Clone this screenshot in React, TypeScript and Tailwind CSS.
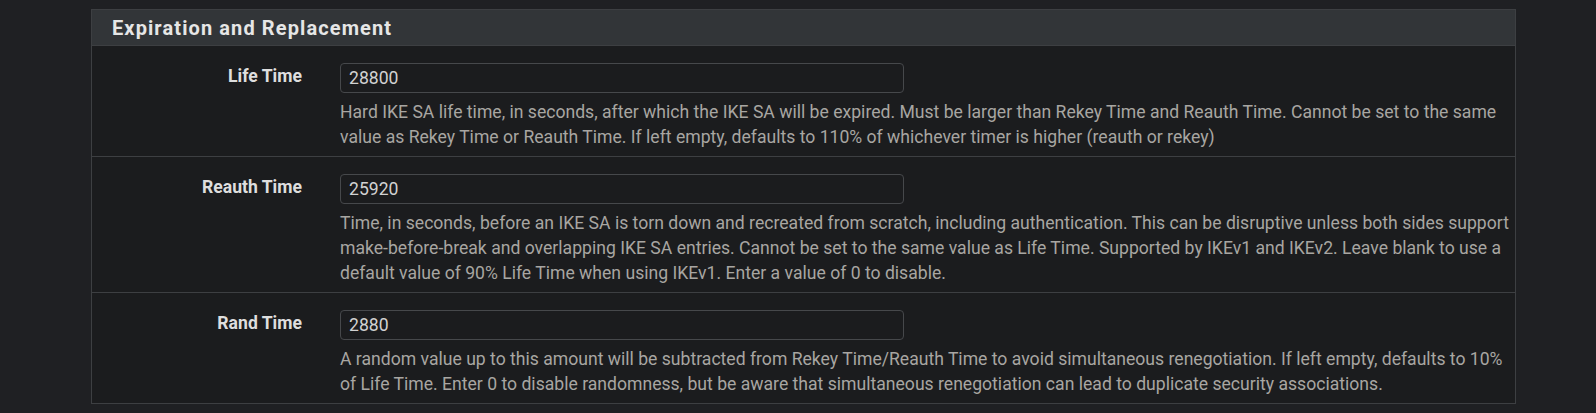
const rows = [
  {
    label: "Life Time",
    value: "28800",
    help: "Hard IKE SA life time, in seconds, after which the IKE SA will be expired. Must be larger than Rekey Time and Reauth Time. Cannot be set to the same value as Rekey Time or Reauth Time. If left empty, defaults to 110% of whichever timer is higher (reauth or rekey)",
  },
  {
    label: "Reauth Time",
    value: "25920",
    help: "Time, in seconds, before an IKE SA is torn down and recreated from scratch, including authentication. This can be disruptive unless both sides support make-before-break and overlapping IKE SA entries. Cannot be set to the same value as Life Time. Supported by IKEv1 and IKEv2. Leave blank to use a default value of 90% Life Time when using IKEv1. Enter a value of 0 to disable.",
  },
  {
    label: "Rand Time",
    value: "2880",
    help: "A random value up to this amount will be subtracted from Rekey Time/Reauth Time to avoid simultaneous renegotiation. If left empty, defaults to 10% of Life Time. Enter 0 to disable randomness, but be aware that simultaneous renegotiation can lead to duplicate security associations.",
  },
];

export default function App() {
  return (
    <div className="min-h-[413px] bg-[#1f2023] pl-[91px] pt-[9px] font-['Roboto','Liberation_Sans',sans-serif]">
      <section className="w-[1425px] border border-[#3d3f42] bg-[#1b1c1e]">
        <div className="flex h-[36px] items-center border-b border-[#3d3f42] bg-[#323538] px-[20px]">
          <h2 className="text-[20px] font-bold tracking-[1.1px] text-[#e6e6e6]">Expiration and Replacement</h2>
        </div>
        {rows.map((row, i) => (
          <div key={row.label} className={`flex pb-[6px] pt-[17px] ${i < rows.length - 1 ? "border-b border-[#3d3f42]" : ""}`}>
            <label className="w-[210px] shrink-0 pt-[1px] text-right text-[17.6px] font-bold leading-[24px] text-[#dedede]">
              {row.label}
            </label>
            <div className="ml-[38px] w-[1172px]">
              <input
                defaultValue={row.value}
                className="h-[30px] w-[564px] rounded-[4px] border border-[#46484b] bg-[#1b1c1e] px-[8px] text-[17.6px] text-[#d2d2d2] outline-none"
              />
              <p className="mt-[7px] text-[17.6px] leading-[25px] text-[#a8a6a2]">{row.help}</p>
            </div>
          </div>
        ))}
      </section>
    </div>
  );
}
